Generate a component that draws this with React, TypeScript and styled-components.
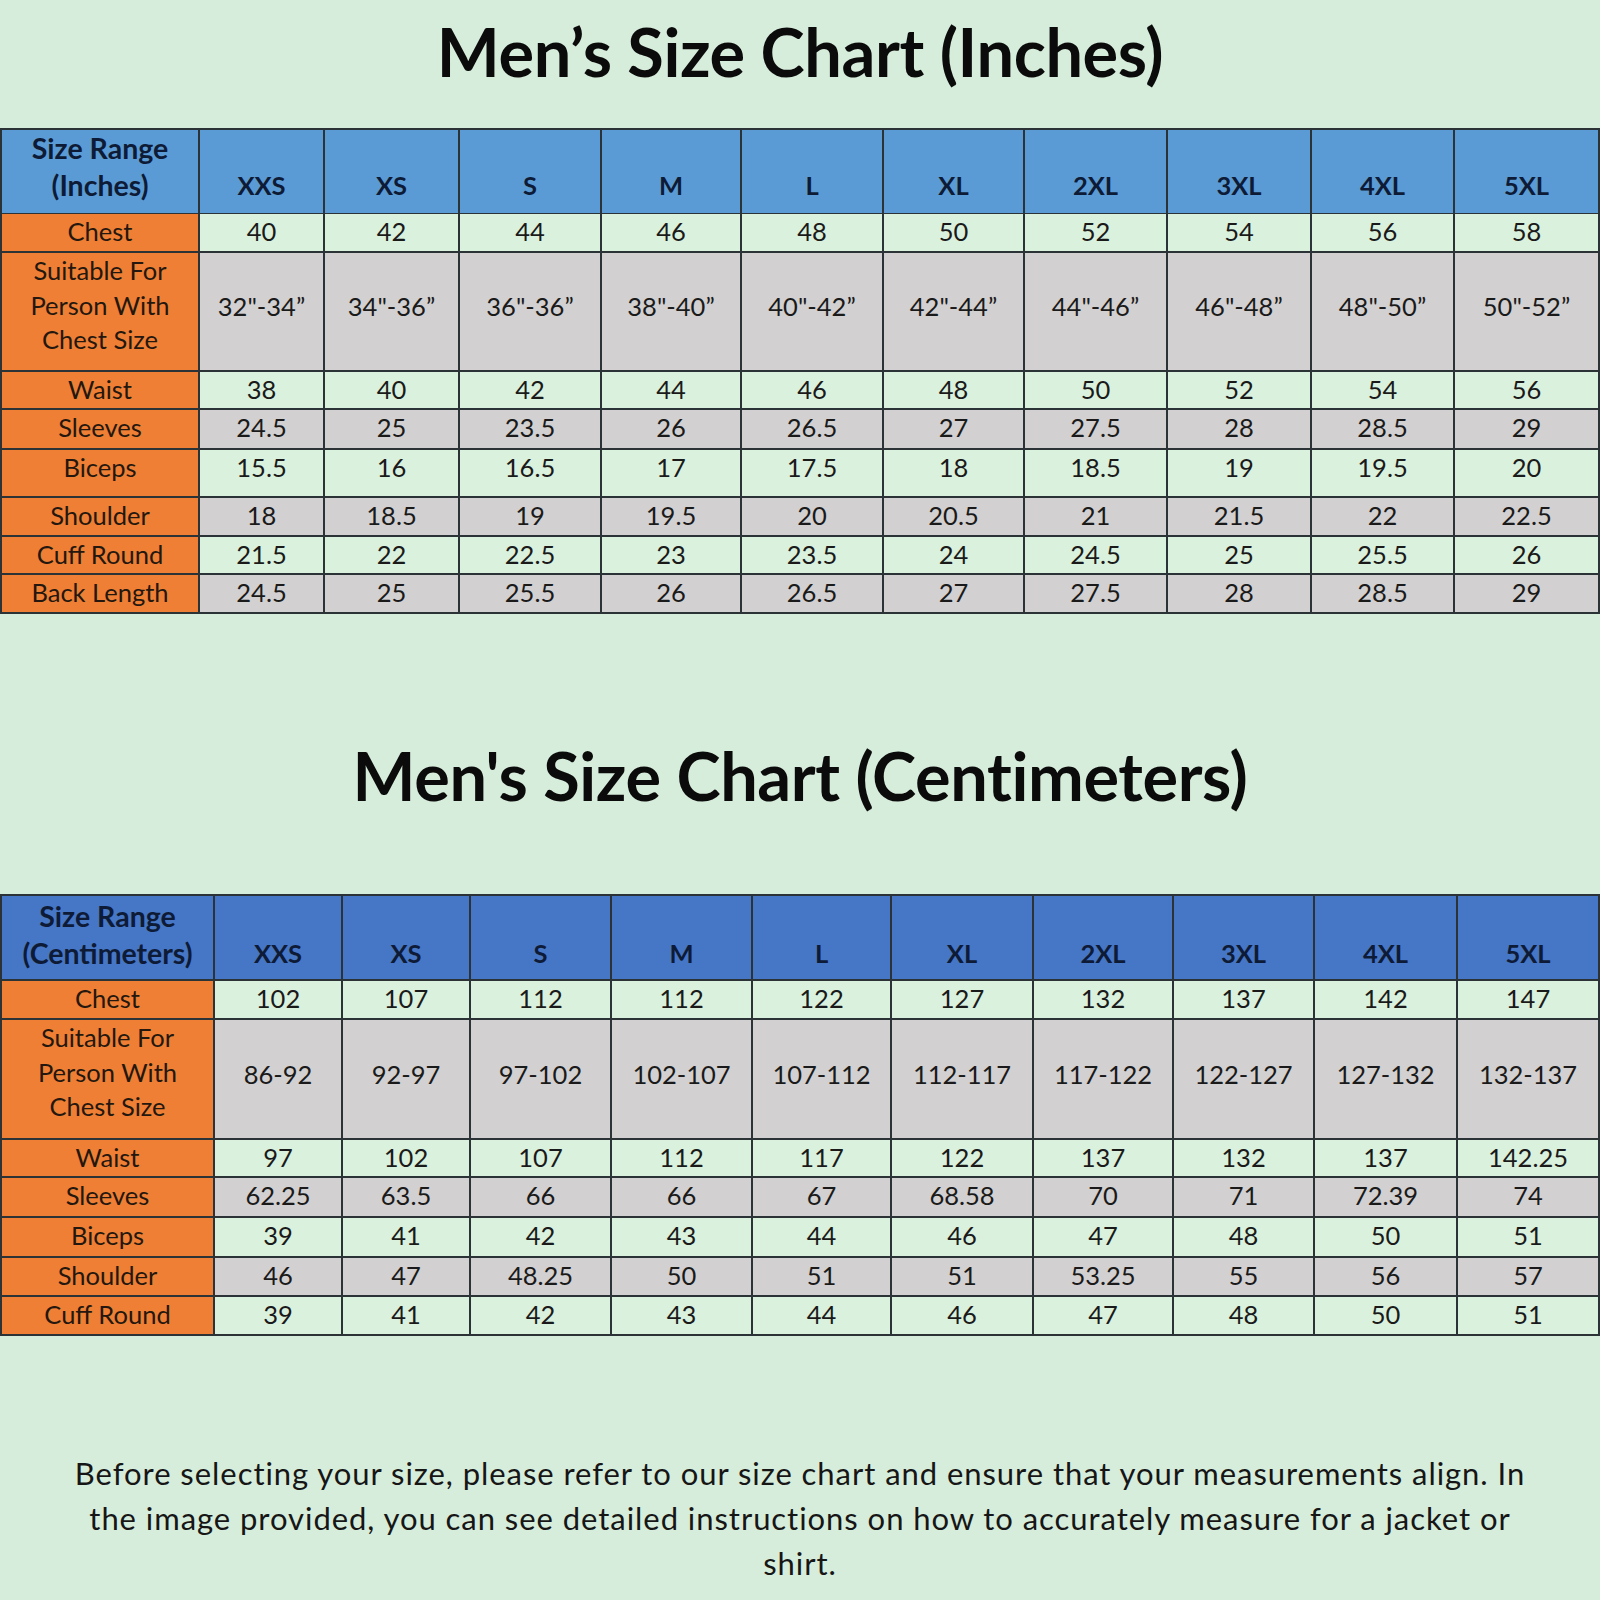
import styled, { createGlobalStyle } from 'styled-components';

const GlobalStyle = createGlobalStyle`
  html, body {
    margin: 0;
    padding: 0;
    background: #d7eddb;
  }
  body {
    font-family: Lato, "Open Sans", "Liberation Sans", sans-serif;
    color: #1b1b1b;
  }
`;

type Kind = 'green' | 'gray';

const inchCols = [198, 125, 135, 142, 140, 142, 141, 143, 144, 143, 145];
const cmCols = [213, 128, 128, 141, 141, 139, 142, 140, 141, 143, 142];

const sizes = ['XXS', 'XS', 'S', 'M', 'L', 'XL', '2XL', '3XL', '4XL', '5XL'];

interface RowData {
  label: string[];
  values: string[];
  height: number;
}

const inchRows: RowData[] = [
  { label: ['Chest'], values: ['40', '42', '44', '46', '48', '50', '52', '54', '56', '58'], height: 39 },
  {
    label: ['Suitable For', 'Person With', 'Chest Size'],
    values: ['32"-34”', '34"-36”', '36"-36”', '38"-40”', '40"-42”', '42"-44”', '44"-46”', '46"-48”', '48"-50”', '50"-52”'],
    height: 119,
  },
  { label: ['Waist'], values: ['38', '40', '42', '44', '46', '48', '50', '52', '54', '56'], height: 38 },
  { label: ['Sleeves'], values: ['24.5', '25', '23.5', '26', '26.5', '27', '27.5', '28', '28.5', '29'], height: 40 },
  { label: ['Biceps'], values: ['15.5', '16', '16.5', '17', '17.5', '18', '18.5', '19', '19.5', '20'], height: 48 },
  { label: ['Shoulder'], values: ['18', '18.5', '19', '19.5', '20', '20.5', '21', '21.5', '22', '22.5'], height: 39 },
  { label: ['Cuff Round'], values: ['21.5', '22', '22.5', '23', '23.5', '24', '24.5', '25', '25.5', '26'], height: 38 },
  { label: ['Back Length'], values: ['24.5', '25', '25.5', '26', '26.5', '27', '27.5', '28', '28.5', '29'], height: 39 },
];

const cmRows: RowData[] = [
  { label: ['Chest'], values: ['102', '107', '112', '112', '122', '127', '132', '137', '142', '147'], height: 39 },
  {
    label: ['Suitable For', 'Person With', 'Chest Size'],
    values: ['86-92', '92-97', '97-102', '102-107', '107-112', '112-117', '117-122', '122-127', '127-132', '132-137'],
    height: 120,
  },
  { label: ['Waist'], values: ['97', '102', '107', '112', '117', '122', '137', '132', '137', '142.25'], height: 38 },
  { label: ['Sleeves'], values: ['62.25', '63.5', '66', '66', '67', '68.58', '70', '71', '72.39', '74'], height: 40 },
  { label: ['Biceps'], values: ['39', '41', '42', '43', '44', '46', '47', '48', '50', '51'], height: 40 },
  { label: ['Shoulder'], values: ['46', '47', '48.25', '50', '51', '51', '53.25', '55', '56', '57'], height: 39 },
  { label: ['Cuff Round'], values: ['39', '41', '42', '43', '44', '46', '47', '48', '50', '51'], height: 39 },
];

const Page = styled.main`
  display: flex;
  flex-direction: column;
  width: 1600px;
  min-height: 1600px;
  overflow: hidden;
`;

const Title = styled.h1<{ $top: number; $height: number; $lift: number }>`
  box-sizing: border-box;
  margin: ${(p) => p.$top}px 0 0;
  height: ${(p) => p.$height}px;
  padding-bottom: ${(p) => p.$lift}px;
  display: flex;
  align-items: center;
  justify-content: center;
  font-size: 66.7px;
  font-weight: 700;
  color: #0b0b0b;
  letter-spacing: -0.4px;
`;

const Table = styled.div<{ $top: number }>`
  margin-top: ${(p) => p.$top}px;
  display: flex;
  flex-direction: column;
  border-top: 2px solid #2c3336;
  border-left: 2px solid #2c3336;
`;

const Row = styled.div<{ $cols: number[]; $height: number }>`
  display: grid;
  grid-template-columns: ${(p) => p.$cols.map((c) => `${c}px`).join(' ')};
  height: ${(p) => p.$height}px;
`;

const Cell = styled.div<{ $kind: Kind }>`
  box-sizing: border-box;
  display: flex;
  align-items: flex-start;
  justify-content: center;
  border-right: 2px solid #2c3336;
  border-bottom: 2px solid #2c3336;
  background: ${(p) => (p.$kind === 'green' ? '#daf1dd' : '#d2d0d0')};
  font-size: 25.5px;
  line-height: 34px;
  color: #1a1a1a;
`;

const TallCell = styled(Cell)`
  align-items: center;
  padding-bottom: 11px;
`;

const LabelCell = styled.div`
  box-sizing: border-box;
  display: flex;
  flex-direction: column;
  align-items: center;
  justify-content: flex-start;
  border-right: 2px solid #2c3336;
  border-bottom: 2px solid #2c3336;
  background: #ee7f34;
  font-size: 25.5px;
  line-height: 34.5px;
  color: #24170f;
  text-align: center;
`;

const HeadCell = styled.div<{ $blue: string; $pad: number; $big?: boolean }>`
  box-sizing: border-box;
  display: flex;
  flex-direction: column;
  align-items: center;
  justify-content: flex-end;
  padding-bottom: ${(p) => p.$pad}px;
  border-right: 2px solid #2c3336;
  border-bottom: 2px solid #2c3336;
  background: ${(p) => p.$blue};
  font-size: ${(p) => (p.$big ? 28.5 : 25.5)}px;
  font-weight: 700;
  line-height: 37px;
  color: #0e1b36;
  text-align: center;
  white-space: nowrap;
`;

const Note = styled.p`
  margin: 115px 0 0;
  text-align: center;
  font-size: 31px;
  line-height: 45px;
  letter-spacing: 0.95px;
  color: #161616;
`;

interface ChartProps {
  unit: string;
  cols: number[];
  rows: RowData[];
  blue: string;
  headHeight: number;
  headPad: number;
  top: number;
}

const Chart = ({ unit, cols, rows, blue, headHeight, headPad, top }: ChartProps) => (
  <Table $top={top}>
    <Row $cols={cols} $height={headHeight}>
      <HeadCell $blue={blue} $pad={headPad} $big>
        <span>Size Range</span>
        <span>({unit})</span>
      </HeadCell>
      {sizes.map((s) => (
        <HeadCell key={s} $blue={blue} $pad={headPad}>
          {s}
        </HeadCell>
      ))}
    </Row>
    {rows.map((r, i) => {
      const kind: Kind = i % 2 === 0 ? 'green' : 'gray';
      const ValueCell = r.label.length > 1 ? TallCell : Cell;
      return (
        <Row key={r.label.join(' ')} $cols={cols} $height={r.height}>
          <LabelCell>
            {r.label.map((l) => (
              <span key={l}>{l}</span>
            ))}
          </LabelCell>
          {r.values.map((v, j) => (
            <ValueCell key={j} $kind={kind}>
              {v}
            </ValueCell>
          ))}
        </Row>
      );
    })}
  </Table>
);

const App = () => {
  return (
    <Page>
      <GlobalStyle />
      <Title $top={0} $height={106} $lift={4}>Men’s Size Chart (Inches)</Title>
      <Chart unit='Inches' cols={inchCols} rows={inchRows} blue='#5b9bd5' headHeight={84} headPad={9} top={22} />
      <Title $top={118} $height={92} $lift={6}>Men's Size Chart (Centimeters)</Title>
      <Chart unit='Centimeters' cols={cmCols} rows={cmRows} blue='#4676c6' headHeight={85} headPad={7} top={70} />
      <Note>
        Before selecting your size, please refer to our size chart and ensure that your measurements align. In
        <br />
        the image provided, you can see detailed instructions on how to accurately measure for a jacket or
        <br />
        shirt.
      </Note>
    </Page>
  );
};

export default App;
